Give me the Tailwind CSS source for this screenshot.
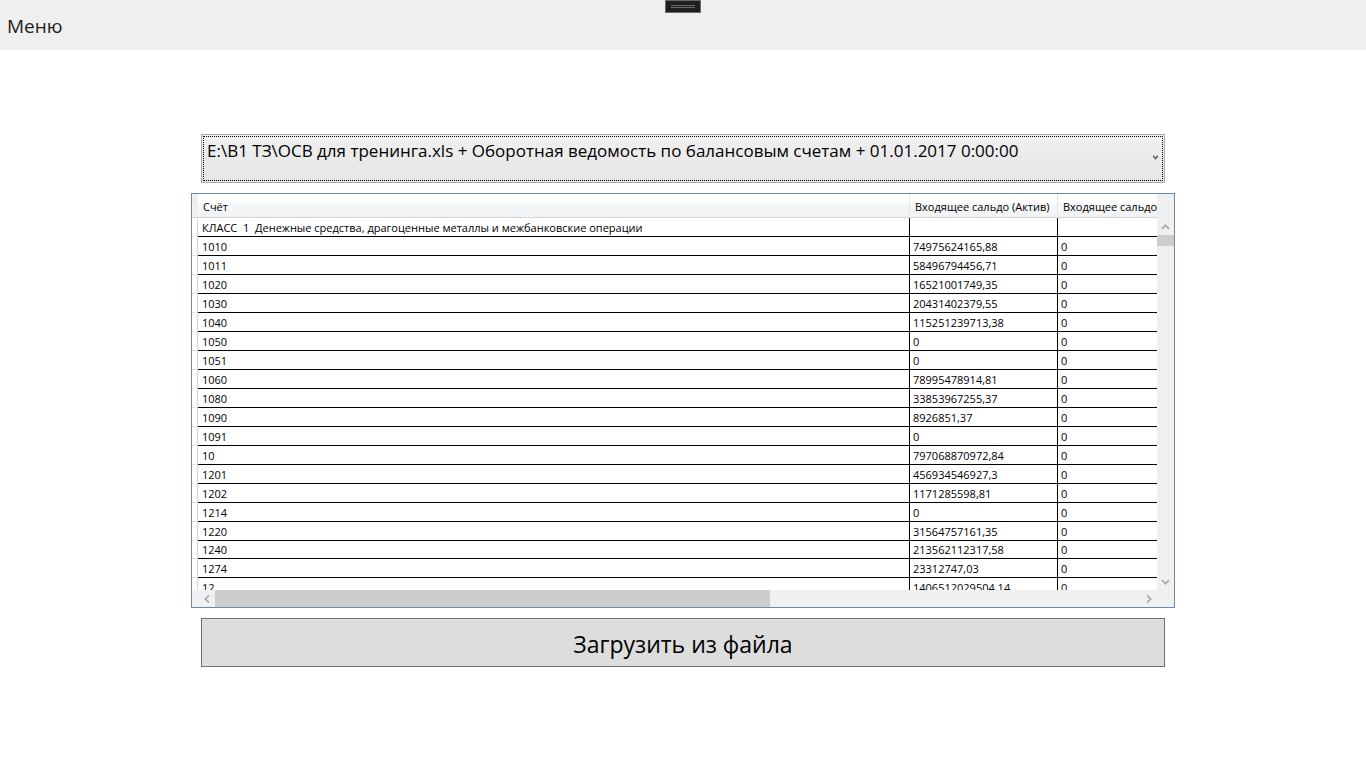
<!DOCTYPE html>
<html lang="ru">
<head>
<meta charset="utf-8">
<title>Оборотная ведомость</title>
<script src="https://cdn.jsdelivr.net/npm/@tailwindcss/browser@4"></script>
</head>
<body class="min-h-screen bg-white font-['Open_Sans','Noto_Sans',sans-serif] text-black">
<header class="relative flex h-[50px] items-center bg-[#efefef] pl-[7px]">
  <button type="button" class="pt-[2px] text-[19px] leading-6 text-[#212121]">Меню</button>
  <div class="absolute left-1/2 top-0 -ml-[18px] flex h-[13px] w-[36px] flex-col items-center justify-center gap-px border border-[#696b69] bg-[#1f1f1f]">
    <span class="h-px w-6 bg-[#696b69]"></span>
    <span class="h-px w-6 bg-[#696b69]"></span>
  </div>
</header>

<main class="mx-[191px] mt-[84px] flex flex-col gap-[10px]">
  <div class="relative mx-[10px]">
    <select aria-label="Ведомость" class="block h-[49px] w-full appearance-none rounded-none border border-[#acacac] bg-linear-to-b from-[#f0f0f0] to-[#e5e5e5] pb-[15px] pl-[5px] text-[17px] outline-1 -outline-offset-3 outline-dotted outline-black">
      <option>E:\B1 ТЗ\ОСВ для тренинга.xls + Оборотная ведомость по балансовым счетам + 01.01.2017 0:00:00</option>
    </select>
    <svg class="pointer-events-none absolute right-[7px] top-[21px]" width="5" height="5" viewBox="0 0 5 5" fill="none" stroke="#606060" stroke-width="1.5"><path d="M0 .8 2.5 3.6 5 .8"/></svg>
  </div>

  <section aria-label="Данные ведомости" class="grid h-[415px] grid-cols-[minmax(0,1fr)_17px] grid-rows-[minmax(0,1fr)_17px] border border-[#688caf] bg-[#f0f0f0]">
    <div class="overflow-hidden bg-white">
      <table class="w-full table-fixed border-separate border-spacing-0 text-left text-[11px] leading-4 whitespace-nowrap">
        <colgroup><col class="w-[6px]"><col><col class="w-[148px]"><col class="w-[99px]"></colgroup>
        <thead>
          <tr class="h-6">
            <td class="border-b border-[#d5d5d5] bg-[#f0f0f0] p-0"></td>
            <th class="border-r border-b border-r-[#e5e5e5] border-b-[#d5d5d5] bg-linear-to-b from-white from-40% via-[#f7f8fa] via-40% to-[#f1f2f4] p-0 pt-[2px] pl-[5px] font-normal">Счёт</th>
            <th class="border-r border-b border-r-[#e5e5e5] border-b-[#d5d5d5] bg-linear-to-b from-white from-40% via-[#f7f8fa] via-40% to-[#f1f2f4] p-0 pt-[2px] pl-[5px] font-normal">Входящее сальдо (Актив)</th>
            <th class="overflow-hidden border-b border-[#d5d5d5] bg-linear-to-b from-white from-40% via-[#f7f8fa] via-40% to-[#f1f2f4] p-0 pt-[2px] pl-[5px] font-normal">Входящее сальдо</th>
          </tr>
        </thead>
        <tbody id="rows"></tbody>
      </table>
    </div>

    <div class="flex flex-col pt-6" aria-label="Вертикальная прокрутка">
      <button type="button" aria-label="Вверх" class="flex h-[17px] items-center justify-center"><svg width="9" height="6" viewBox="0 0 9 6" fill="none" stroke="#a3a3a3" stroke-width="1.6"><path d="M1 5 4.500 1.200 8 5"/></svg></button>
      <div class="flex-1"><div class="h-[11px] bg-[#cdcdcd]"></div></div>
      <button type="button" aria-label="Вниз" class="flex h-[17px] items-center justify-center"><svg width="9" height="6" viewBox="0 0 9 6" fill="none" stroke="#a3a3a3" stroke-width="1.6"><path d="M1 1 4.500 4.800 8 1"/></svg></button>
    </div>

    <div class="flex pl-[6px]" aria-label="Горизонтальная прокрутка">
      <button type="button" aria-label="Влево" class="flex w-[17px] items-center justify-center"><svg width="6" height="8" viewBox="0 0 6 8" fill="none" stroke="#a3a3a3" stroke-width="1.6"><path d="M5 .5 1.300 4 5 7.500"/></svg></button>
      <div class="flex-1"><div class="h-full w-3/5 bg-[#cdcdcd]"></div></div>
      <button type="button" aria-label="Вправо" class="flex w-[17px] items-center justify-center"><svg width="6" height="8" viewBox="0 0 6 8" fill="none" stroke="#a3a3a3" stroke-width="1.6"><path d="M1 .5 4.700 4 1 7.500"/></svg></button>
    </div>
    <div></div>
  </section>

  <button type="button" class="mx-[10px] h-[49px] border border-[#707070] bg-[#dddddd] pt-[3px] text-[23px] leading-8">Загрузить из файла</button>
</main>

<script>
const data = [
  ['КЛАСС  1  Денежные средства, драгоценные металлы и межбанковские операции', '', ''],
  ['1010', '74975624165,88', '0'],
  ['1011', '58496794456,71', '0'],
  ['1020', '16521001749,35', '0'],
  ['1030', '20431402379,55', '0'],
  ['1040', '115251239713,38', '0'],
  ['1050', '0', '0'],
  ['1051', '0', '0'],
  ['1060', '78995478914,81', '0'],
  ['1080', '33853967255,37', '0'],
  ['1090', '8926851,37', '0'],
  ['1091', '0', '0'],
  ['10', '797068870972,84', '0'],
  ['1201', '456934546927,3', '0'],
  ['1202', '1171285598,81', '0'],
  ['1214', '0', '0'],
  ['1220', '31564757161,35', '0'],
  ['1240', '213562112317,58', '0'],
  ['1274', '23312747,03', '0'],
  ['12', '1406512029504,14', '0']
];
document.getElementById('rows').innerHTML = data.map(r => `
  <tr class="h-[19px]">
    <td class="border-r border-b border-r-[#d5d5d5] border-b-[#e5e5e5] p-0"></td>
    <td class="border-r border-b border-black p-0 pt-px pl-1 whitespace-pre">${r[0]}</td>
    <td class="border-r border-b border-black p-0 pt-px pl-[3px]">${r[1]}</td>
    <td class="border-b border-black p-0 pt-px pl-[3px]">${r[2]}</td>
  </tr>`).join('');
document.querySelector('#rows tr:nth-child(18)').className = 'h-[18px]';
</script>
</body>
</html>
